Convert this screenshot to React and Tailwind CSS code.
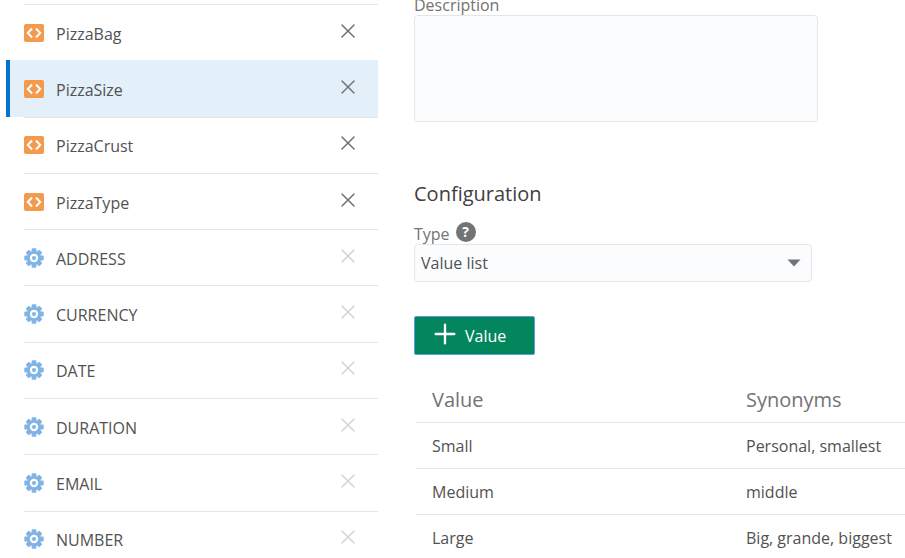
import { X, Plus } from "lucide-react";

const entities = [
  { name: "PizzaBag", custom: true },
  { name: "PizzaSize", custom: true, selected: true },
  { name: "PizzaCrust", custom: true },
  { name: "PizzaType", custom: true },
  { name: "ADDRESS" },
  { name: "CURRENCY" },
  { name: "DATE" },
  { name: "DURATION" },
  { name: "EMAIL" },
  { name: "NUMBER" },
];

const values = [
  { value: "Small", synonyms: "Personal, smallest" },
  { value: "Medium", synonyms: "middle" },
  { value: "Large", synonyms: "Big, grande, biggest" },
];

const CustomIcon = () => (
  <span className="flex h-[18px] w-5 shrink-0 items-center justify-center rounded-xs bg-[#f39a4c]">
    <svg viewBox="0 0 20 18" className="h-[18px] w-5" fill="none" stroke="white" strokeWidth="2">
      <path d="M8 4.5 L3.8 9 L8 13.5" />
      <path d="M12 4.5 L16.2 9 L12 13.5" />
    </svg>
  </span>
);

const GearIcon = () => (
  <svg viewBox="0 0 20 20" className="h-5 w-5 shrink-0">
    {[0, 45, 90, 135, 180, 225, 270, 315].map((deg) => (
      <rect key={deg} x="7.6" y="0.3" width="4.8" height="5" rx="1" fill="#80b3e6" transform={`rotate(${deg} 10 10)`} />
    ))}
    <circle cx="10" cy="10" r="7" fill="#80b3e6" />
    <circle cx="10" cy="10" r="4.2" fill="white" />
    <circle cx="10" cy="10" r="2" fill="#80b3e6" />
  </svg>
);

const EntityRow = ({ entity }) => (
  <li className={`border-l-4 pl-3.5 ${entity.selected ? "border-[#0572ce] bg-[#e3eff9]" : "border-transparent"}`}>
    <div className={`flex h-full items-center border-t ${entity.selected ? "border-[#e3eff9]" : "border-neutral-200"}`}>
      <div className="flex flex-1 items-center gap-3">
        {entity.custom ? <CustomIcon /> : <GearIcon />}
        <span className="mt-0.5">{entity.name}</span>
      </div>
      <button className={`mr-4.5 mb-1 ${entity.custom ? "text-neutral-500" : "text-neutral-300"}`}>
        <X size={24} strokeWidth={1.5} />
      </button>
    </div>
  </li>
);

export default function App() {
  return (
    <div className="flex h-screen overflow-hidden bg-white text-base text-neutral-600 font-['Open_Sans',sans-serif]">
      <ul className="mt-1 ml-1.5 grid h-[563px] w-[372px] shrink-0 grid-rows-10">
        {entities.map((entity) => (
          <EntityRow key={entity.name} entity={entity} />
        ))}
      </ul>

      <div className="ml-9 -mt-1.5 flex-1">
        <label className="block pt-px leading-5 text-neutral-500">Description</label>
        <textarea className="block h-[107px] w-[404px] resize-none rounded-sm border border-neutral-200 bg-[#fbfcfe] px-2 py-1 leading-6" />

        <h2 className="mt-14 text-xl leading-8 text-neutral-700">Configuration</h2>

        <div className="mt-3.5 flex items-center gap-1.5 leading-5 text-neutral-500">
          <span>Type</span>
          <span className="-mt-1 flex h-5 w-5 items-center justify-center rounded-full bg-neutral-500 text-sm font-bold text-white">?</span>
        </div>
        <div className="flex w-[398px] items-center justify-between rounded-sm border border-neutral-200 bg-[#fbfcfe] py-1.5 pr-2.5 pl-1.5 leading-6">
          <span>Value list</span>
          <svg viewBox="0 0 14 8" className="h-2 w-3.5 fill-neutral-500">
            <path d="M0.5 0.5 H13.5 L7 7.5 Z" />
          </svg>
        </div>

        <div className="mt-8 flex pt-0.5">
          <button className="flex items-center gap-1 rounded-xs border border-[#5b9fe0] bg-[#04865d] py-1.5 pr-7 pl-3.5 text-white">
            <Plus size={32} strokeWidth={1.75} className="-mt-2 -mb-1" />
            <span className="mt-px leading-6">Value</span>
          </button>
        </div>

        <div className="mt-5 ml-0.5">
          <div className="flex h-12 items-center border-b border-neutral-200 pt-0.5 text-xl text-neutral-500">
            <div className="w-80 px-4">Value</div>
            <div className="flex-1 px-2.5">Synonyms</div>
          </div>
          {values.map((row) => (
            <div key={row.value} className="flex h-11.5 items-center border-b border-neutral-200">
              <div className="w-80 px-4">{row.value}</div>
              <div className="flex-1 px-2.5">{row.synonyms}</div>
            </div>
          ))}
        </div>
      </div>
    </div>
  );
}
